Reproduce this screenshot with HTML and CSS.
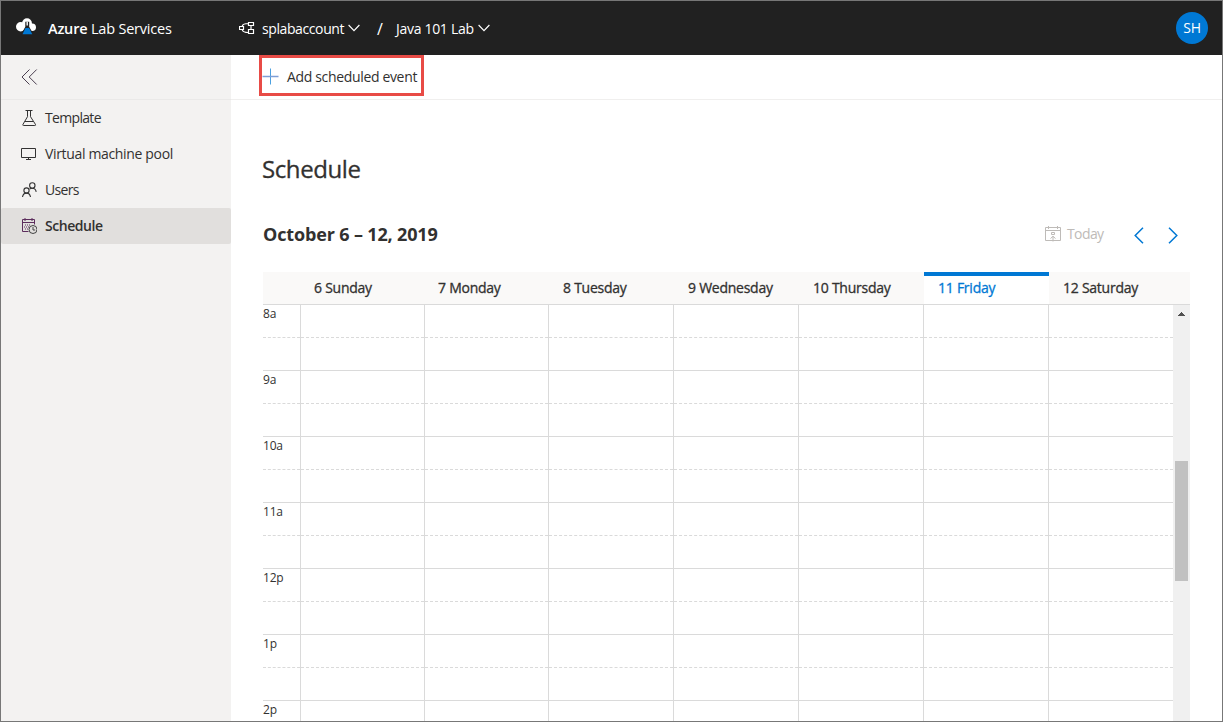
FILE: index.html
```html
<!DOCTYPE html>
<html lang="en">
<head>
<meta charset="utf-8">
<title>Azure Lab Services</title>
<link rel="stylesheet" href="styles.css">
</head>
<body>
<div class="app">
  <header class="topbar">
    <svg class="logo" width="20" height="18" viewBox="0 0 20 18"><g fill="#fff"><circle cx="4.700" cy="8.800" r="4.700"/><circle cx="11" cy="5.200" r="4.900"/><circle cx="16.200" cy="9.200" r="3.800"/></g><path d="M9.300 3.800h3.900v5l4.500 8H5l4.300-8z" fill="#212121"/><path d="M10.500 3.800h1.400v3.700h-1.400z" fill="#fff"/><path d="M9.500 10h3.600l3.200 6.200H6.500z" fill="#0078d4"/></svg>
    <div class="brand"><b>Azure</b> Lab Services</div>
    <svg class="org" width="16" height="14" viewBox="0 0 16 14" fill="none" stroke="#fff" stroke-width="1.2"><path d="M.5 5.500h4v3h-4zM9.500 1.500h5v3h-5zM9.500 8.500h5v4h-5zM3.200 5C4 3 5 2.500 9 2.500M3.200 9c.8 1.600 2 2.500 5.800 2.500M12 4.500v4"/></svg>
    <div class="crumb account">splabaccount</div>
    <svg class="chev" width="12" height="8" viewBox="0 0 12 8"><path d="M.6 1l5.400 5.600L11.400 1"/></svg>
    <div class="slash">/</div>
    <div class="crumb lab">Java 101 Lab</div>
    <svg class="chev" width="12" height="8" viewBox="0 0 12 8"><path d="M.6 1l5.400 5.600L11.400 1"/></svg>
    <div class="avatar">SH</div>
  </header>
  <div class="body">
    <nav class="sidebar">
      <div class="collapse"><svg width="17" height="16" viewBox="0 0 17 16" fill="none" stroke="#4a3f50"><path d="M8.500.5L1 8l7.500 7.500M15.700.5L8.200 8l7.500 7.500"/></svg></div>
      <div class="item"><svg width="16" height="17" viewBox="0 0 16 17" fill="none" stroke="#333"><path d="M4.500.5h7M6.500.5v6.200L2 14.300q-.7 1.200.6 1.200h11.200q1.300 0 .6-1.200L9.500 6.700V.5M4 11.500h8"/></svg><span class="n1">Template</span></div>
      <div class="item"><svg width="16" height="17" viewBox="0 0 16 17" fill="none" stroke="#333"><path d="M.5 2.500h14v9H.5zM7.500 11.500v2M5 13.500h5"/></svg><span class="n2">Virtual machine pool</span></div>
      <div class="item"><svg width="16" height="17" viewBox="0 0 16 17" fill="none" stroke="#333" stroke-width="1.100"><circle cx="11.300" cy="3.500" r="2.700"/><circle cx="5.500" cy="8.500" r="2.600"/><path d="M1.500 15c.4-2.500 1.700-3.900 4-3.900s3.600 1.400 4 3.900M8.500 7.200c.8-.7 1.600-1 2.800-1 2.200 0 3.500 1.300 3.900 3.600"/></svg><span class="n3">Users</span></div>
      <div class="item active"><svg width="16" height="17" viewBox="0 0 16 17" fill="none" stroke="#5c2d5c"><path d="M7.500 13.500h-6V1.500h12v5M1.500 4.500h12M4 0v3M11 0v3"/><path d="M4 7h6M3 9h5M4 11h4" stroke-dasharray="1 1"/><circle cx="12" cy="11.500" r="4" stroke="#444"/><path d="M12 9v3h2.200" stroke="#444"/></svg><span class="n4">Schedule</span></div>
    </nav>
    <main class="main">
      <div class="commands"><div class="add"><svg width="17" height="17" viewBox="0 0 17 17"><path d="M8.500.5v16" stroke="#4ba0e0"/><path d="M.5 8.500h16" stroke="#7f9fd6" stroke-width="1.500"/></svg><span>Add scheduled event</span></div></div>
      <h1>Schedule</h1>
      <div class="range">
        <h2>October 6 – 12, 2019</h2>
        <svg class="cal" width="16" height="16" viewBox="0 0 16 16" fill="none" stroke="#bebbb8"><path d="M.5 1.500h15v13H.5zM.5 4.500h15M3.500 0v3M12.500 0v3M6.500 6.500h3v2h-3zM8 10v5.500M5.500 12.500L8 10.300l2.500 2.200"/></svg>
        <span class="today">Today</span>
        <svg class="prev" width="10" height="17" viewBox="0 0 10 17"><path d="M9 .7L1.200 8.500 9 16.300"/></svg>
        <svg class="next" width="10" height="17" viewBox="0 0 10 17"><path d="M1 .7l7.800 7.800L1 16.300"/></svg>
      </div>
      <div class="calendar">
        <div class="days"><div></div><div>6 Sunday</div><div>7 Monday</div><div>8 Tuesday</div><div>9 Wednesday</div><div>10 Thursday</div><div class="current">11 Friday</div><div>12 Saturday</div></div>
        <div class="view">
          <div class="grid">
            <div class="hour"><div>8a</div><div></div><div></div><div></div><div></div><div></div><div></div><div></div></div>
            <div class="hour"><div>9a</div><div></div><div></div><div></div><div></div><div></div><div></div><div></div></div>
            <div class="hour"><div>10a</div><div></div><div></div><div></div><div></div><div></div><div></div><div></div></div>
            <div class="hour"><div>11a</div><div></div><div></div><div></div><div></div><div></div><div></div><div></div></div>
            <div class="hour"><div>12p</div><div></div><div></div><div></div><div></div><div></div><div></div><div></div></div>
            <div class="hour"><div>1p</div><div></div><div></div><div></div><div></div><div></div><div></div><div></div></div>
            <div class="hour"><div>2p</div><div></div><div></div><div></div><div></div><div></div><div></div><div></div></div>
          </div>
          <div class="scroll"><svg width="7" height="4" viewBox="0 0 7 4" shape-rendering="crispEdges"><path d="M3 0h1v1h1v1h1v1h1v1H0V3h1V2h1V1h1z" fill="#505050"/></svg><div class="thumb"></div></div>
        </div>
      </div>
    </main>
  </div>
</div>
</body>
</html>
```
FILE: styles.css
```css
* { box-sizing: border-box; }
body { margin: 0; font: 14px/20px "Open Sans", "Noto Sans", sans-serif; color: #323130; }
svg { display: block; flex: none; }
.app { width: 1223px; height: 722px; border: 1px solid #777; overflow: hidden; display: flex; flex-direction: column; background: #fff; white-space: nowrap; }
.topbar { height: 54px; flex: none; background: #212121; color: #fff; display: flex; align-items: center; padding: 0 14px 0 15px; }
.logo { margin-bottom: 3px; }
.brand { width: 191px; margin-left: 12px; padding-top: 2px; font-size: 14.500px; letter-spacing: -.2px; }
.brand b { font-weight: 600; }
.org { width: 16px; margin-right: 7px; }
.crumb, .slash { padding-top: 2px; }
.account { width: 86px; letter-spacing: -.4px; }
.chev { fill: none; stroke: #fff; stroke-width: 1.200; }
.slash { width: 36px; padding-left: 17px; font-size: 16px; }
.lab { width: 82px; letter-spacing: -.3px; }
.avatar { width: 32px; height: 32px; margin-left: auto; border-radius: 50%; background: #0078d4; line-height: 32px; text-align: center; font-size: 14px; letter-spacing: -.3px; }
.body { flex: 1; min-height: 0; display: flex; }
.sidebar { width: 230px; flex: none; background: #f3f2f1; }
.collapse { height: 45px; border-bottom: 1px solid #eae9e8; padding: 14px 20px; }
.item { height: 36px; display: flex; align-items: center; gap: 8px; padding-left: 20px; }
.item.active { background: #e1dfdd; border-radius: 2px; font-weight: 600; }
.n1 { letter-spacing: -.68px; }
.n2 { letter-spacing: -.34px; }
.n3 { letter-spacing: -.7px; }
.n4 { letter-spacing: -.45px; }
.main { flex: 1; display: flex; flex-direction: column; }
.commands { height: 45px; flex: none; border-bottom: 1px solid #f0efee; padding-left: 28px; }
.add { width: 165px; height: 41px; border: 3px solid #e84b46; padding-top: 2px; display: flex; align-items: center; gap: 8px; letter-spacing: -.34px; }
h1 { margin: 53px 0 0 31px; font-size: 24px; line-height: 32px; font-weight: 400; letter-spacing: -.4px; -webkit-text-stroke: .3px; }
h2 { margin: 0; width: 782px; font-size: 18px; line-height: 22px; font-weight: 700; letter-spacing: -.15px; }
.range { margin: 37px 0 0 32px; height: 24px; display: flex; align-items: center; }
.today { width: 66px; padding-left: 6px; color: #bebbb8; letter-spacing: -.6px; }
.cal { margin-bottom: 1px; }
.prev, .next { fill: none; stroke: #0078d4; stroke-width: 1.500; margin-top: 3px; }
.prev { margin-left: 7px; }
.next { margin-left: 24px; }
.calendar { flex: 1; min-height: 0; margin: 26px 0 0 32px; width: 927px; display: flex; flex-direction: column; }
.days, .hour { display: grid; grid-template-columns: 38px 124px 124px 125px 125px 125px 125px 124px; }
.days { height: 33px; flex: none; background: #faf9f8; border-bottom: 1px solid #dadada; line-height: 32px; letter-spacing: -.25px; -webkit-text-stroke: .3px; }
.days > div { padding-left: 13px; }
.days > div:nth-child(n+4) { padding-left: 14px; }
.days .current { background: #fff; border-top: 4px solid #0078d4; color: #0078d4; line-height: 24px; }
.view { flex: 1; min-height: 0; display: flex; overflow: hidden; }
.grid { width: 910px; }
.hour { height: 66px; }
.hour > div { display: flex; flex-direction: column; border-right: 1px solid #dadada; border-bottom: 1px solid #dadada; font-size: 12px; line-height: 18px; letter-spacing: -.2px; }
.hour > div::after { content: ""; height: 32px; flex: none; border-bottom: 1px dashed #dadada; }
.hour > div:first-child::after { margin-top: -18px; }
.hour > div:last-child { border-right: 0; }
.scroll { width: 17px; background: #f0f0f0; padding: 7px 2px 0; }
.scroll svg { margin: 0 auto; }
.thumb { width: 13px; height: 120px; background: #c1c1c1; margin-top: 145px; }
```
